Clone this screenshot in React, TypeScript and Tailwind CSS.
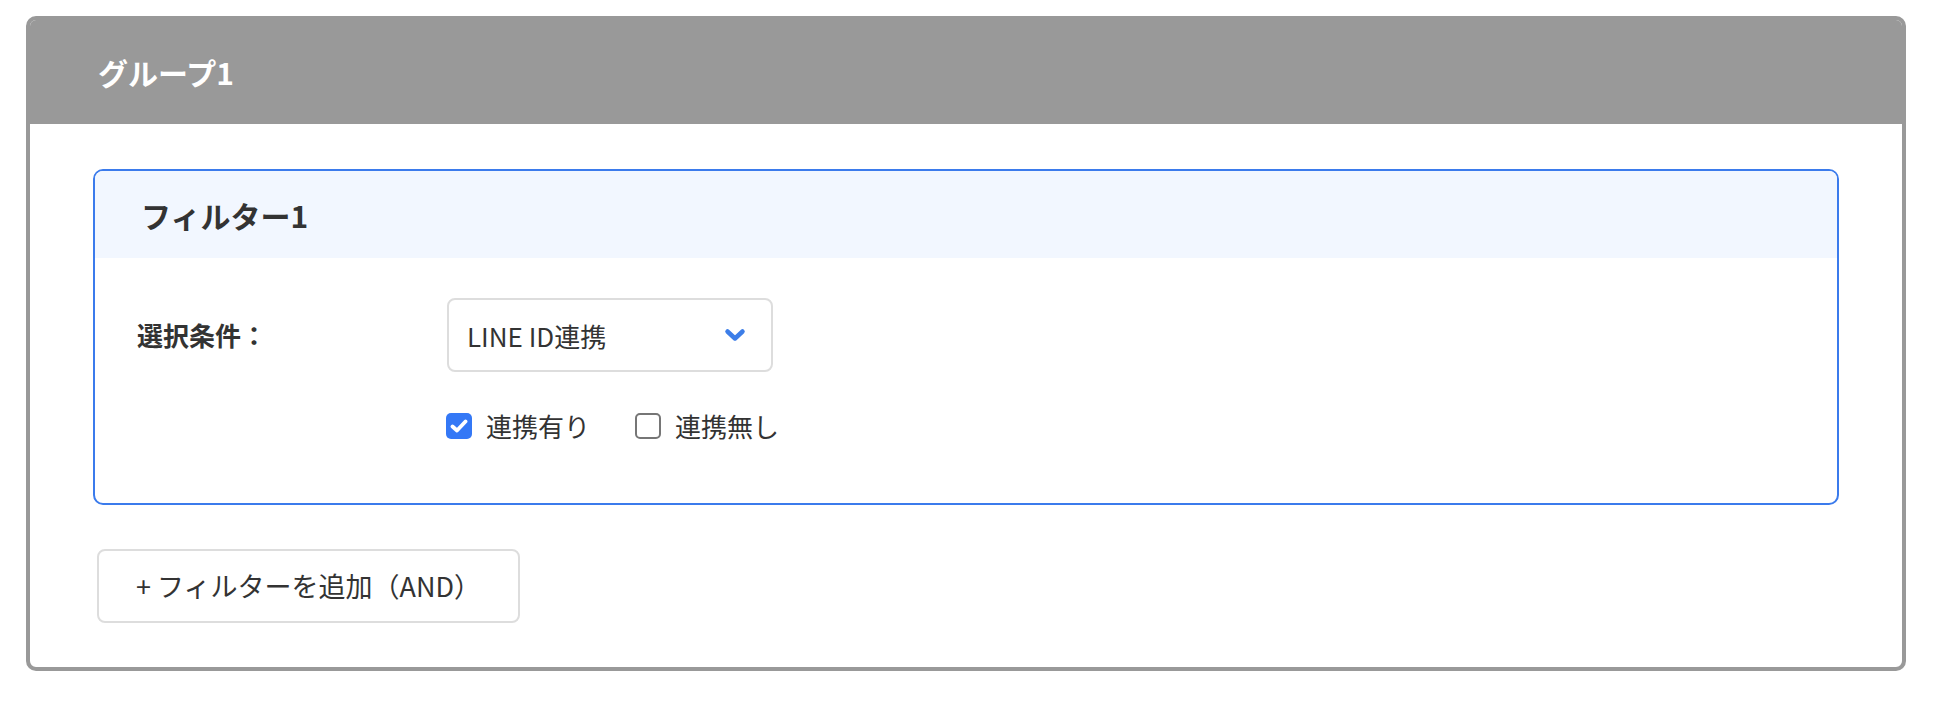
import { useState } from 'react';

const font = { fontFamily: '"Noto Sans CJK JP", "Noto Sans", sans-serif' };

function ChevronDown() {
  return (
    <svg width="22" height="16" viewBox="0 0 22 16" fill="none">
      <path d="M3.5 4.5 L11 11.5 L18.5 4.5" stroke="#3d7ee8" strokeWidth="4.5" strokeLinecap="round" strokeLinejoin="round" />
    </svg>
  );
}

function Checkbox({ checked, label, onChange }: { checked: boolean; label: string; onChange: () => void }) {
  return (
    <label className="flex items-center gap-[14px] cursor-pointer" onClick={onChange}>
      {checked ? (
        <span className="flex h-[26px] w-[26px] items-center justify-center rounded-[5px] bg-[#3478f6]">
          <svg width="18" height="14" viewBox="0 0 18 14" fill="none">
            <path d="M2.5 7.5 L7 11.5 L15.5 2.5" stroke="white" strokeWidth="3.8" strokeLinecap="round" strokeLinejoin="round" />
          </svg>
        </span>
      ) : (
        <span className="h-[26px] w-[26px] rounded-[5px] border-2 border-[#767676] bg-white" />
      )}
      <span className="text-[26px] leading-[36px] text-[#333]">{label}</span>
    </label>
  );
}

export default function App() {
  const [linked, setLinked] = useState(true);
  const [unlinked, setUnlinked] = useState(false);

  return (
    <div className="min-h-[710px] bg-white pl-[26px] pt-[16px]" style={font}>
      <div className="w-[1880px] overflow-hidden rounded-[10px] border-4 border-[#999999] bg-white">
        <div className="flex h-[105px] items-center bg-[#999999] pl-[68px] -mt-px">
          <h2 className="text-[30px] font-bold leading-none text-white">グループ1</h2>
        </div>

        <div className="px-[63px] pt-[45px] pb-[44px]">
          <div className="overflow-hidden rounded-[10px] border-2 border-[#3b7bec]">
            <div className="flex h-[87px] items-center bg-[#f2f7ff] pl-[46px]">
              <h3 className="text-[30px] font-bold leading-none text-[#333]">フィルター1</h3>
            </div>

            <div className="pl-[42px] pt-[40px] pb-[59px]">
              <div className="grid grid-cols-[310px_1fr] items-center">
                <div className="text-[26px] font-bold leading-none text-[#333]">選択条件：</div>
                <button className="flex h-[74px] w-[326px] items-center justify-between rounded-[8px] border-2 border-[#dddddd] bg-white pl-[18px] pr-[25px]">
                  <span className="text-[26px] text-[#333]">LINE ID連携</span>
                  <ChevronDown />
                </button>
              </div>
              <div className="mt-[36px] flex items-center gap-[45px] pl-[309px]">
                <Checkbox checked={linked} label="連携有り" onChange={() => setLinked(!linked)} />
                <Checkbox checked={unlinked} label="連携無し" onChange={() => setUnlinked(!unlinked)} />
              </div>
            </div>
          </div>

          <button className="mt-[44px] ml-[4px] flex h-[74px] w-[423px] items-center justify-center rounded-[8px] border-2 border-[#dddddd] bg-white">
            <span className="text-[27px] text-[#333]">+ フィルターを追加（AND）</span>
          </button>
        </div>
      </div>
    </div>
  );
}
